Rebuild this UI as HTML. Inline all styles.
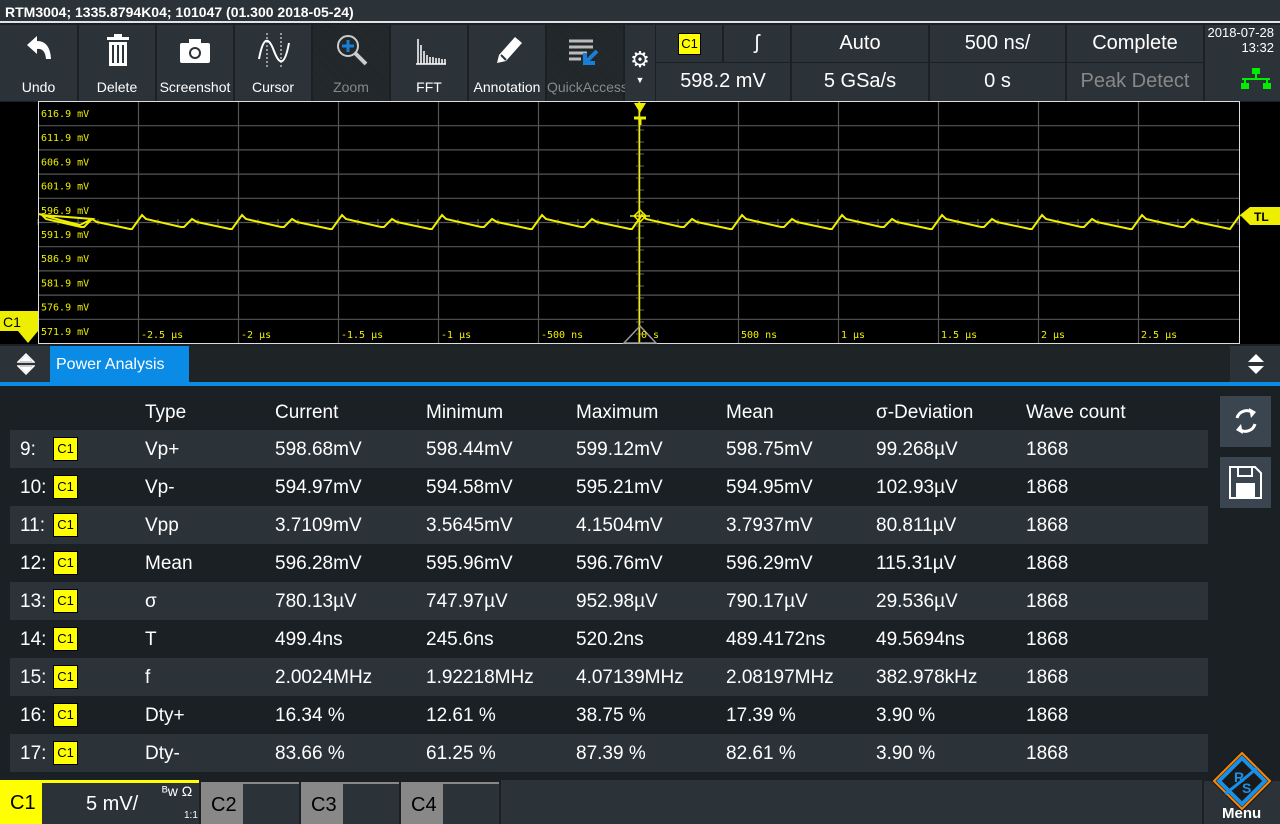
<!DOCTYPE html>
<html><head><meta charset="utf-8"><style>
*{margin:0;padding:0;box-sizing:border-box}
body{width:1280px;height:824px;background:#1b2024;position:relative;overflow:hidden;font-family:"Liberation Sans Narrow","Liberation Sans",sans-serif;color:#fff}
.a{position:absolute}
.title{left:0;top:0;width:1280px;height:23px;background:#2b3339;font:bold 14px "Liberation Sans",sans-serif;padding:4px 0 0 5px;border-bottom:2px solid #dfe3e6}
.btn{top:25px;height:76px;background:#2b3339;text-align:center;font-size:14px}
.btn .l{position:absolute;bottom:6px;width:100%;left:0}
.dark{background:#1e2326 repeating-linear-gradient(45deg,#262c30 0 1px,#1e2326 1px 2px)}
.cell{background:#2b3339;text-align:center;font-size:20px;line-height:37px}
.row{left:10px;width:1198px;height:38px}
.row.o{background:#2b3339}
.t{position:absolute;font-size:19px;top:9px}
.bdg{position:absolute;left:43px;top:7px;width:25px;height:24px;background:#ff0;border:1px solid #000;color:#000;font-size:13px;text-align:center;line-height:22px}
.hd{top:402px;font-size:19px;color:#fff}
</style></head><body>
<div class="a title">RTM3004; 1335.8794K04; 101047 (01.300 2018-05-24)</div>
<div class="a" style="left:0;top:25px;width:1280px;height:77px;background:#1b2024"></div>
<div class="a btn" style="left:0;width:77px"><svg class="a" style="left:24px;top:10px" width="30" height="32" viewBox="0 0 30 32"><path d="M3 10 L13 1 L13 6 Q26 6 27 24 L22 24 Q21 13 13 14 L13 19Z" fill="#fff"/></svg><div class="l">Undo</div></div>
<div class="a btn" style="left:79px;width:76px"><svg class="a" style="left:27px;top:8px" width="24" height="34"><rect x="1" y="4" width="22" height="3" fill="#fff"/><rect x="8" y="1" width="8" height="3" fill="#fff"/><rect x="3" y="9" width="18" height="24" fill="#fff"/><g fill="#2b3339"><rect x="6" y="12" width="2" height="18"/><rect x="11" y="12" width="2" height="18"/><rect x="16" y="12" width="2" height="18"/></g></svg><div class="l">Delete</div></div>
<div class="a btn" style="left:157px;width:76px"><svg class="a" style="left:23px;top:14px" width="30" height="24"><rect x="0" y="4" width="30" height="20" rx="2" fill="#fff"/><rect x="9" y="0" width="12" height="6" fill="#fff"/><circle cx="15" cy="14" r="6" fill="#2b3339"/><circle cx="15" cy="14" r="4" fill="#fff"/></svg><div class="l">Screenshot</div></div>
<div class="a btn" style="left:235px;width:76px"><svg class="a" style="left:22px;top:8px" width="34" height="36"><path d="M10 0V36M24 0V36" stroke="#fff" stroke-dasharray="2 2"/><path d="M2 26 Q8 -6 17 18 Q26 42 32 10" stroke="#fff" stroke-width="2" fill="none"/></svg><div class="l">Cursor</div></div>
<div class="a btn dark" style="left:313px;width:76px"><svg class="a" style="left:22px;top:8px" width="34" height="34"><circle cx="13" cy="13" r="10" stroke="#ccc" stroke-width="2" fill="none"/><path d="M13 7V19M7 13H19" stroke="#1a7fd4" stroke-width="3"/><path d="M20 20L31 31" stroke="#ccc" stroke-width="4"/></svg><div class="l" style="color:#888">Zoom</div></div>
<div class="a btn" style="left:391px;width:76px"><svg class="a" style="left:24px;top:12px" width="32" height="28"><g stroke="#fff" stroke-width="1.5"><path d="M1 27H31M3 27V2M6 27V8M9 27V14M12 27V18M15 27V20M18 27V20M21 27V21M24 27V21M27 27V22M30 27V22"/></g></svg><div class="l">FFT</div></div>
<div class="a btn" style="left:469px;width:76px"><svg class="a" style="left:24px;top:8px" width="32" height="34"><path d="M4 30 L6 22 L22 4 L29 10 L13 28Z" fill="#fff"/><path d="M8 22 L13 27" stroke="#2b3339" stroke-width="2"/></svg><div class="l">Annotation</div></div>
<div class="a btn dark" style="left:547px;width:76px"><svg class="a" style="left:22px;top:14px" width="32" height="28"><g stroke="#bbb" stroke-width="3"><path d="M0 2H24M0 8H24M0 14H18M0 20H12"/></g><path d="M28 12 L18 22 M16 14 V24 H26" stroke="#1a7fd4" stroke-width="4" fill="none"/></svg><div class="l" style="color:#888">QuickAccess</div></div>
<div class="a" style="left:625px;top:25px;width:30px;height:76px;background:#2b3339;text-align:center"><div style="font-size:22px;margin-top:22px">⚙</div><div style="font-size:9px;margin-top:2px">▼</div></div>
<div class="a cell" style="left:656px;top:25px;width:66px;height:37px"><div class="a" style="left:22px;top:8px;width:23px;height:22px;background:#ff0;border:1px solid #000;color:#000;font-size:13px;line-height:20px">C1</div></div>
<div class="a cell" style="left:724px;top:25px;width:66px;height:37px">ʃ</div>
<div class="a cell" style="left:792px;top:25px;width:136px;height:37px">Auto</div>
<div class="a cell" style="left:930px;top:25px;width:135px;height:37px">500 ns/</div>
<div class="a cell" style="left:1067px;top:25px;width:136px;height:37px">Complete</div>
<div class="a cell" style="left:656px;top:63px;width:134px;height:38px">598.2 mV</div>
<div class="a cell" style="left:792px;top:63px;width:136px;height:38px">5 GSa/s</div>
<div class="a cell" style="left:930px;top:63px;width:135px;height:38px">0 s</div>
<div class="a cell" style="left:1067px;top:63px;width:136px;height:38px;color:#888">Peak Detect</div>
<div class="a" style="left:1205px;top:25px;width:75px;height:76px;background:#2b3339;text-align:right;padding-right:6px;font-size:13px;line-height:15px">2018-07-28<br>13:32</div>
<svg class="a" style="left:1240px;top:68px" width="32" height="22"><g fill="#0e0"><rect x="12" y="0" width="8" height="6"/><rect x="15" y="6" width="2" height="5"/><rect x="2" y="10" width="28" height="2"/><rect x="4" y="12" width="2" height="3"/><rect x="26" y="12" width="2" height="3"/><rect x="1" y="15" width="8" height="6"/><rect x="23" y="15" width="8" height="6"/></g></svg>
<div class="a" style="left:0;top:102px;width:1280px;height:242px;background:#000"></div>
<svg class="a" style="left:0;top:101px" width="1280" height="245">
<g stroke="#555" stroke-width="1.2" id="g"></g>
<rect x="38.5" y="0.5" width="1201" height="242" fill="none" stroke="#ddd"/>
<polyline id="w" fill="none" stroke="#ee0" stroke-width="2"/>
<path d="M639.5 0V243" stroke="#ee0" stroke-width="1.5"/>
<path d="M634 2H646L640 12Z" fill="#ee0"/><path d="M634 17H646M640 17V24" stroke="#ee0" stroke-width="3"/>
<path d="M640 109L646 115L640 121L634 115Z M630 115H650" stroke="#ee0" fill="none" stroke-width="1.5"/>
<path d="M640 225L624 242H656Z" fill="none" stroke="#999" stroke-width="1.5"/>
<path d="M1240 114L1250 106H1280V124H1250Z" fill="#ee0"/><text x="1254" y="120" font-size="12" font-weight="bold" font-family="Liberation Sans">TL</text>
<path d="M0 210H38V230L28 242L18 230H0Z" fill="#ee0"/><text x="3" y="226" font-size="14" font-family="Liberation Sans">C1</text>
<g fill="#ee0" font-family="DejaVu Sans Mono" font-size="10" id="lb"></g>
</svg>
<div class="a" style="left:0;top:346px;width:1280px;height:36px;background:#1e2326"></div>
<div class="a" style="left:0;top:346px;width:50px;height:36px;background:#2b3339"></div>
<div class="a" style="left:1230px;top:346px;width:50px;height:36px;background:#2b3339"></div>
<svg class="a" style="left:17px;top:352px" width="18" height="24"><path d="M1 10L9 2L17 10Z M1 14L9 22L17 14Z" fill="none" stroke="#fff" stroke-width="1.5"/><path d="M3 9L9 3L15 9Z M3 15L9 21L15 15Z" fill="#fff"/></svg>
<svg class="a" style="left:1247px;top:352px" width="18" height="24"><path d="M1 10L9 2L17 10Z M1 14L9 22L17 14Z" fill="#fff"/></svg>
<div class="a" style="left:50px;top:346px;width:139px;height:36px;background:#0a8be6;font-size:16px;padding:10px 0 0 6px">Power Analysis</div>
<div class="a" style="left:0;top:382px;width:1280px;height:4px;background:#0a8be6"></div>
<div class="a hd" style="left:145px">Type</div><div class="a hd" style="left:275px">Current</div><div class="a hd" style="left:426px">Minimum</div><div class="a hd" style="left:576px">Maximum</div><div class="a hd" style="left:726px">Mean</div><div class="a hd" style="left:876px">σ-Deviation</div><div class="a hd" style="left:1026px">Wave count</div>
<div id="rows"></div>
<div class="a" style="left:1220px;top:396px;width:51px;height:51px;background:#3a4550"></div>
<svg class="a" style="left:1232px;top:406px" width="28" height="30"><path d="M5 12A10 10 0 0 1 21 7" stroke="#fff" stroke-width="3" fill="none"/><path d="M17 2L24 6L19 12Z" fill="#fff"/><path d="M23 18A10 10 0 0 1 7 23" stroke="#fff" stroke-width="3" fill="none"/><path d="M11 28L4 24L9 18Z" fill="#fff"/></svg>
<div class="a" style="left:1220px;top:457px;width:51px;height:51px;background:#3a4550"></div>
<svg class="a" style="left:1229px;top:466px" width="33" height="33"><path d="M1 1H26L32 7V32H1Z" fill="none" stroke="#fff" stroke-width="2"/><rect x="9" y="1" width="14" height="9" fill="none" stroke="#fff" stroke-width="2"/><rect x="7" y="17" width="19" height="15" fill="#fff"/></svg>
<div class="a" style="left:0;top:780px;width:1280px;height:44px;background:#1b2024"></div>
<div class="a" style="left:0;top:780px;width:42px;height:44px;background:#ff0;color:#000;font-size:20px;padding:12px 0 0 10px">C1</div>
<div class="a" style="left:42px;top:780px;width:157px;height:44px;background:#2b3339;border-top:3px solid #ff0;font-size:20px;padding:10px 0 0 44px">5 mV/<span style="position:absolute;left:120px;top:0;font-size:14px">ᴮw Ω</span><span style="position:absolute;left:142px;top:27px;font-size:10px">1:1</span></div>
<div class="a" style="left:201px;top:782px;width:98px;height:42px;background:#2b3339;border-top:2px solid #888"><div style="width:42px;height:40px;background:#888;color:#000;font-size:20px;padding:10px 0 0 10px">C2</div></div>
<div class="a" style="left:301px;top:782px;width:98px;height:42px;background:#2b3339;border-top:2px solid #888"><div style="width:42px;height:40px;background:#888;color:#000;font-size:20px;padding:10px 0 0 10px">C3</div></div>
<div class="a" style="left:401px;top:782px;width:98px;height:42px;background:#2b3339;border-top:2px solid #888"><div style="width:42px;height:40px;background:#888;color:#000;font-size:20px;padding:10px 0 0 10px">C4</div></div>
<div class="a" style="left:501px;top:780px;width:701px;height:44px;background:#2b3339"></div>
<div class="a" style="left:1204px;top:781px;width:76px;height:43px;background:#2b3339"></div>
<svg class="a" style="left:1209px;top:748px" width="66" height="66"><path d="M33 2L64 33L33 64L2 33Z" fill="#1a1a1a"/><path d="M33 5L61 33L33 61L5 33Z" fill="none" stroke="#f80" stroke-width="2"/><path d="M33 10L56 33L33 56L10 33Z" fill="none" stroke="#1a8fe6" stroke-width="4"/><path d="M16 46Q33 33 48 20" stroke="#1a8fe6" stroke-width="3" fill="none"/><text x="25" y="34" fill="#1a8fe6" font-size="14" font-weight="bold" font-family="Liberation Sans">R</text><text x="33" y="45" fill="#1a8fe6" font-size="14" font-weight="bold" font-family="Liberation Sans">S</text></svg>
<div class="a" style="left:1222px;top:805px;font:bold 15px 'Liberation Sans',sans-serif">Menu</div>
<script>
var g=document.getElementById('g'),s='';
for(var i=1;i<12;i++){var x=38.5+i*100;s+='<path d="M'+x+' 0V243"/>';}
for(var j=1;j<10;j++){var y=0.5+j*24.2;s+='<path d="M38 '+y+'H1240"/>';}
for(var x=38;x<1240;x+=20)s+='<path d="M'+x+' 118V124"/>';
for(var y=5;y<243;y+=12)s+='<path d="M636 '+y+'H644"/>';
g.innerHTML=s;
var lb='',v=[616.9,611.9,606.9,601.9,596.9,591.9,586.9,581.9,576.9,571.9];
for(var j=0;j<10;j++)lb+='<text x="41" y="'+(16+j*24.2)+'">'+v[j].toFixed(1)+' mV</text>';
var tl=['-2.5 µs','-2 µs','-1.5 µs','-1 µs','-500 ns','0 s','500 ns','1 µs','1.5 µs','2 µs','2.5 µs'];
for(var i=0;i<11;i++)lb+='<text x="'+(141+i*100)+'" y="237">'+tl[i]+'</text>';
document.getElementById('lb').innerHTML=lb;
var p=[[39,113],[60,119],[80,124],[92,118]];
for(var k=0;k<12;k++){var b=42+k*100;p.push([b-10,128],[b,114],[b+4,118],[b+39,126],[b+42,126],[b+50,118],[b+55,121],[b+88,128]);}
p.push([1240,114]);
document.getElementById('w').setAttribute('points',p.filter(function(q){return q[0]>=39&&q[0]<=1240}).map(function(q){return q.join(',')}).join(' '));
var R=[['9:','Vp+','598.68mV','598.44mV','599.12mV','598.75mV','99.268µV'],['10:','Vp-','594.97mV','594.58mV','595.21mV','594.95mV','102.93µV'],['11:','Vpp','3.7109mV','3.5645mV','4.1504mV','3.7937mV','80.811µV'],['12:','Mean','596.28mV','595.96mV','596.76mV','596.29mV','115.31µV'],['13:','σ','780.13µV','747.97µV','952.98µV','790.17µV','29.536µV'],['14:','T','499.4ns','245.6ns','520.2ns','489.4172ns','49.5694ns'],['15:','f','2.0024MHz','1.92218MHz','4.07139MHz','2.08197MHz','382.978kHz'],['16:','Dty+','16.34 %','12.61 %','38.75 %','17.39 %','3.90 %'],['17:','Dty-','83.66 %','61.25 %','87.39 %','82.61 %','3.90 %']];
var X=[135,265,416,566,716,866],h='';
R.forEach(function(r,i){h+='<div class="a row'+(i%2?'':' o')+'" style="top:'+(430+i*38)+'px"><span class="t" style="left:10px">'+r[0]+'</span><span class="bdg">C1</span>';
for(var c=1;c<7;c++)h+='<span class="t" style="left:'+X[c-1]+'px">'+r[c]+'</span>';
h+='<span class="t" style="left:1016px">1868</span></div>';});
document.getElementById('rows').innerHTML=h;
</script>
</body></html>
